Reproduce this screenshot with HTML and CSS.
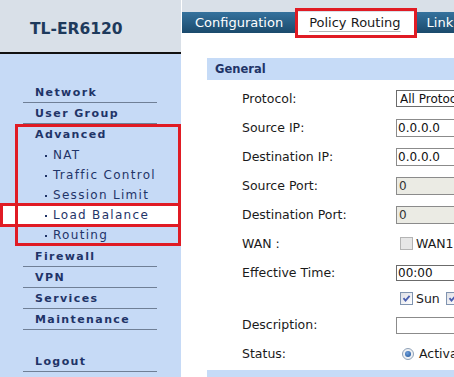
FILE: index.html
```html
<!DOCTYPE html>
<html lang="en">
<head>
    <meta charset="UTF-8">
    <meta name="viewport" content="width=device-width, initial-scale=1.0">
    <title>TL-ER6120 - Policy Routing</title>
    <link rel="stylesheet" href="styles.css">
</head>
<body>
    <div class="page">
        <aside class="side">
            <div class="brand">TL-ER6120</div>
            <nav class="menu">
                <a class="menu-item">Network</a>
                <a class="menu-item">User Group</a>
                <div class="group">
                    <a class="menu-item open">Advanced</a>
                    <a class="sub">NAT</a>
                    <a class="sub">Traffic Control</a>
                    <a class="sub">Session Limit</a>
                    <a class="sub current">Load Balance</a>
                    <a class="sub">Routing</a>
                    <span class="mark mark-group"></span>
                    <span class="mark mark-item"></span>
                </div>
                <a class="menu-item">Firewall</a>
                <a class="menu-item">VPN</a>
                <a class="menu-item">Services</a>
                <a class="menu-item">Maintenance</a>
                <a class="menu-item logout">Logout</a>
            </nav>
        </aside>

        <main class="main">
            <div class="topbar">
                <div class="tabs">
                    <a class="tab">Configuration</a>
                    <a class="tab active">Policy Routing<span class="mark mark-tab"></span></a>
                    <a class="tab">Link Backup</a>
                </div>
            </div>

            <section class="panel">
                <h2 class="panel-title">General</h2>
                <div class="form">
                    <label class="label">Protocol:</label>
                    <div class="field"><select class="select"><option>All Protocol</option></select></div>

                    <label class="label">Source IP:</label>
                    <div class="field"><input class="text" value="0.0.0.0"></div>

                    <label class="label">Destination IP:</label>
                    <div class="field"><input class="text" value="0.0.0.0"></div>

                    <label class="label">Source Port:</label>
                    <div class="field"><input class="text off" value="0" disabled></div>

                    <label class="label">Destination Port:</label>
                    <div class="field"><input class="text off" value="0" disabled></div>

                    <label class="label">WAN :</label>
                    <div class="field"><span class="check disabled"></span><span class="opt">WAN1</span></div>

                    <label class="label">Effective Time:</label>
                    <div class="field"><select class="select time"><option>00:00</option></select></div>

                    <span class="label"></span>
                    <div class="field">
                        <span class="check on"><svg viewBox="0 0 11 11" width="11" height="11"><path d="M2.5 5.2 L4.5 7.6 L8.6 2.8" fill="none" stroke="#4a5fb0" stroke-width="1.8"/></svg></span><span class="opt day">Sun</span>
                        <span class="check on"><svg viewBox="0 0 11 11" width="11" height="11"><path d="M2.5 5.2 L4.5 7.6 L8.6 2.8" fill="none" stroke="#4a5fb0" stroke-width="1.8"/></svg></span><span class="opt day">Mon</span>
                    </div>

                    <label class="label">Description:</label>
                    <div class="field"><input class="text desc" value=""></div>

                    <label class="label">Status:</label>
                    <div class="field"><span class="radio"></span><span class="opt">Activate</span></div>
                </div>
                <div class="panel-title next"></div>
            </section>
        </main>
    </div>
</body>
</html>
```

FILE: styles.css
```css
body {
    margin: 0;
    padding: 0;
    background-color: #ffffff;
    font-family: "DejaVu Sans", Verdana, sans-serif;
    overflow: hidden;
}
.page {
    display: grid;
    grid-template-columns: 181px 1fr;
    column-gap: 1px;
    height: 100vh;
}

/* left column */
.side {
    background-color: #c6daf6;
}
.brand {
    height: 54px;
    padding: 5px 0 0 30px;
    box-sizing: border-box;
    display: flex;
    align-items: center;
    background-color: #d9e0e8;
    border-bottom: 2px solid #111111;
    color: #1e3a5c;
    font-size: 15.5px;
    font-weight: bold;
}
.menu {
    display: flex;
    flex-direction: column;
    padding-top: 28px;
}
.menu-item {
    margin: 0 24px 0 23px;
    padding-left: 12px;
    height: 20px;
    line-height: 21px;
    border-bottom: 1px solid #6f7f96;
    color: #1f3468;
    font-size: 11px;
    font-weight: bold;
    letter-spacing: 1.4px;
}
.menu-item.open {
    border-bottom-color: transparent;
}
.menu-item.logout {
    margin-top: 21px;
}
.group {
    position: relative;
    display: flex;
    flex-direction: column;
    padding-bottom: 1px;
}
.sub {
    height: 20px;
    line-height: 21px;
    padding-left: 45px;
    color: #1f3468;
    font-size: 12px;
    letter-spacing: 1.3px;
}
.sub::before {
    content: "";
    display: inline-block;
    width: 2px;
    height: 2px;
    margin-right: 6px;
    vertical-align: middle;
    background-color: #1f3468;
}
.sub.current {
    background-color: #ffffff;
}

/* red annotation frames */
.mark {
    position: absolute;
    border: 3px solid #e01b24;
    box-sizing: border-box;
    pointer-events: none;
}
.mark-group {
    left: 15px;
    right: 0;
    top: 0;
    height: 122px;
}
.mark-item {
    left: 0;
    right: 0;
    top: 79px;
    height: 24px;
}
.mark-tab {
    left: -1px;
    right: -3px;
    top: -4px;
    bottom: -5px;
}

/* right column */
.main {
    overflow: hidden;
}
.topbar {
    background-color: #d9e0e8;
    padding-top: 12px;
}
.tabs {
    display: flex;
    gap: 1px;
    height: 21px;
    padding-left: 1px;
    background: linear-gradient(#35729d, #1b4a6c);
    white-space: nowrap;
}
.tab {
    position: relative;
    padding: 0 12px;
    line-height: 21px;
    color: #ffffff;
    font-size: 13px;
}
.tab.active {
    padding: 0 13px;
    background-color: #ffffff;
    color: #1a1a1a;
    text-decoration: underline;
    text-decoration-color: #b5b5b5;
    text-underline-offset: 4px;
}

.panel {
    margin: 25px 0 0 25px;
    width: 420px;
}
.panel-title {
    margin: 0;
    height: 22px;
    line-height: 22px;
    padding-left: 8px;
    background-color: #c6dbf7;
    color: #1f3468;
    font-size: 11.5px;
    font-weight: bold;
}
.panel-title.next {
    margin-top: 2px;
}
.form {
    display: grid;
    grid-template-columns: 154px 1fr;
    grid-template-rows: repeat(7, 29px) 23px 29px 29px;
    padding: 4px 0 0 35px;
    color: #1a1a1a;
    font-size: 12.5px;
}
.label, .field {
    display: flex;
    align-items: center;
    white-space: nowrap;
}
.text, .select {
    box-sizing: border-box;
    width: 140px;
    height: 18px;
    margin: 0;
    padding: 0 1px;
    border: 1px solid #8b8b8b;
    background-color: #ffffff;
    color: #111111;
    font-family: "DejaVu Sans", Verdana, sans-serif;
    font-size: 12px;
    outline: none;
}
.select {
    appearance: none;
    height: 17px;
    padding: 0 3px;
    border-color: #6b6b6b;
}
.select.time {
    height: 16px;
    padding: 0 1px;
    margin-top: 1px;
}
.text.off {
    background-color: #ebebe4;
    color: #333333;
    padding-left: 2px;
}
.text.desc {
    height: 17px;
    margin-top: 1px;
}
.check {
    box-sizing: border-box;
    display: inline-flex;
    align-items: center;
    justify-content: center;
    width: 13px;
    height: 13px;
    margin: 0 2px 0 4px;
    border: 1px solid #8094b0;
    background: linear-gradient(135deg, #dedfe6, #ffffff);
}
.check.disabled {
    border-color: #b4b4b4;
    background: #e6e6e6;
}
.opt {
    margin-left: 1px;
}
.opt.day {
    margin-right: 2px;
}
.radio {
    box-sizing: border-box;
    display: inline-flex;
    align-items: center;
    justify-content: center;
    width: 12px;
    height: 12px;
    margin: 0 4px 0 6px;
    border: 1px solid #8fa2b8;
    border-radius: 50%;
    background-color: #eef0f3;
}
.radio::after {
    content: "";
    width: 6px;
    height: 6px;
    border-radius: 50%;
    background: radial-gradient(circle at 40% 35%, #6fa0dc, #1b4f94);
}
```
